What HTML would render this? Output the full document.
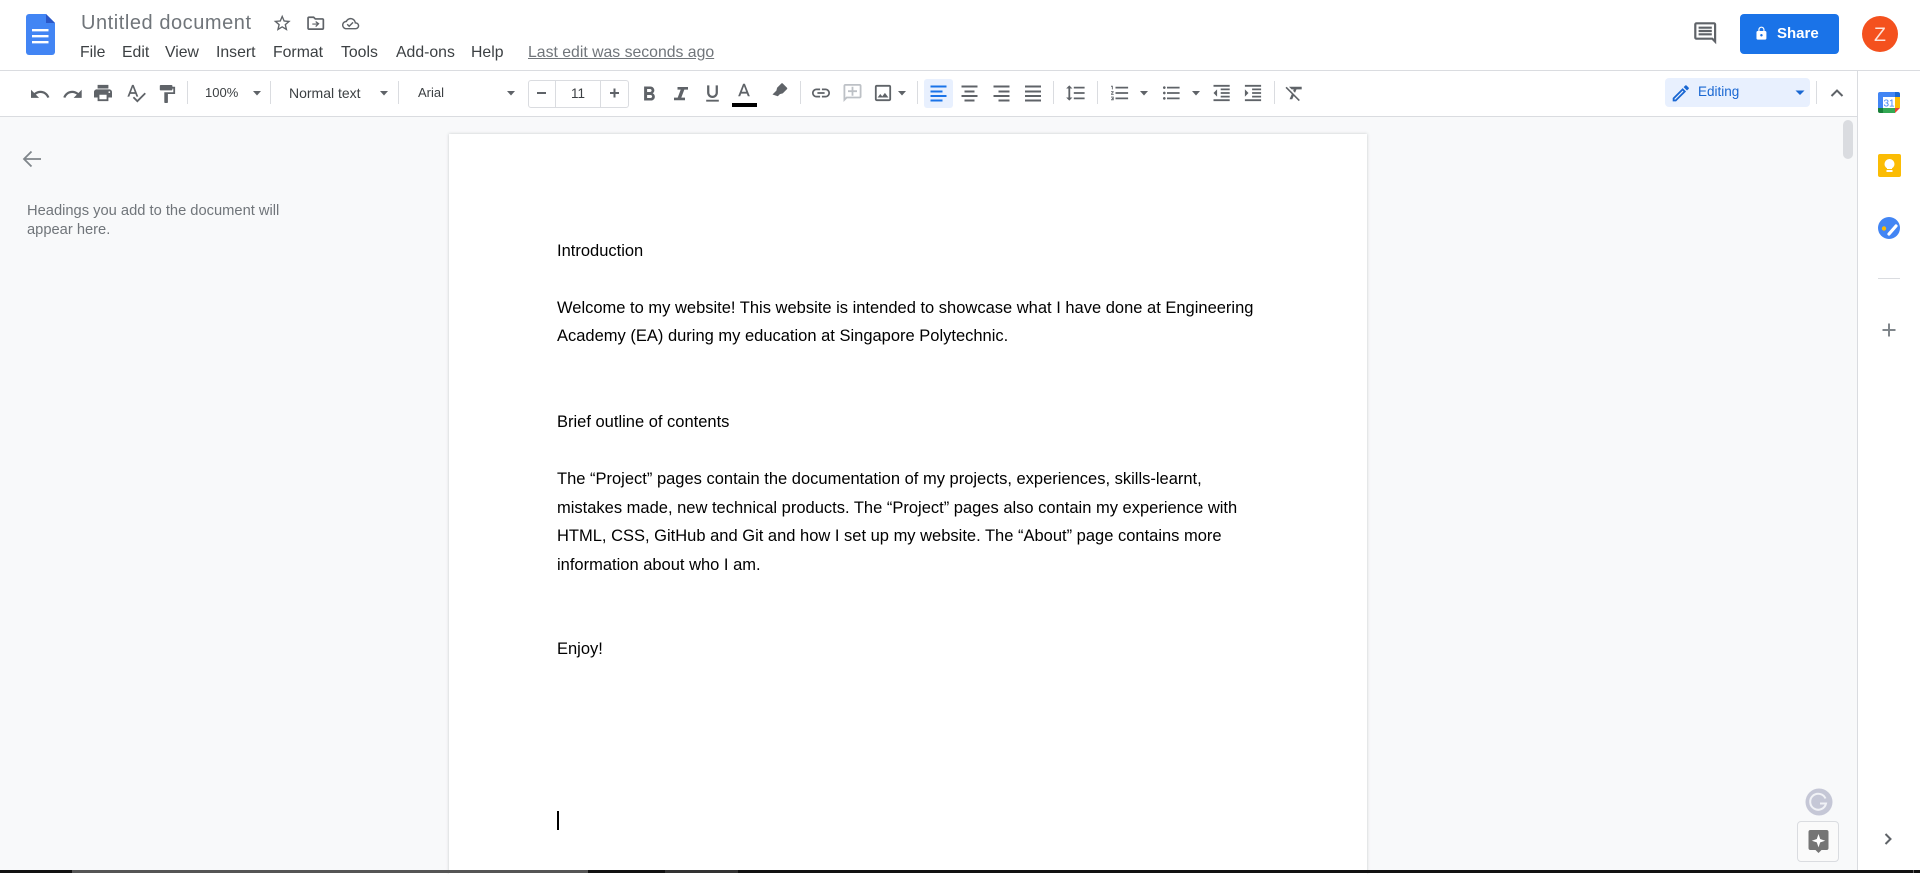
<!DOCTYPE html>
<html lang="en"><head><meta charset="utf-8"><title>Untitled document</title>
<style>
html,body{margin:0;padding:0;width:1920px;height:873px;overflow:hidden;background:#fff;font-family:"Liberation Sans",Arial,sans-serif}
.t{position:absolute;white-space:nowrap;line-height:20px}
.m{top:43px;font-size:15.8px;color:#3c4043}
.tb{top:83px;font-size:13px;color:#3c4043}
.d{position:absolute;left:557px;font-size:16.5px;line-height:28px;color:#000;white-space:nowrap}
.b{position:absolute}
svg.o{position:absolute;left:0;top:0}
</style></head><body>
<!-- backgrounds -->
<div class="b" style="left:0;top:116px;width:1857px;height:754px;background:#f8f9fa"></div>
<div class="b" style="left:0;top:70px;width:1920px;height:1px;background:#dadce0"></div>
<div class="b" style="left:0;top:116px;width:1857px;height:1px;background:#dadce0"></div>
<div class="b" style="left:1857px;top:70px;width:1px;height:800px;background:#dadce0"></div>
<div class="b" style="left:449px;top:134px;width:918px;height:740px;background:#fff;box-shadow:0 0 3px rgba(60,64,67,.25)"></div>
<!-- bottom bar -->
<div class="b" style="left:0;top:870px;width:1920px;height:3px;background:#111"></div>
<div class="b" style="left:72px;top:870px;width:516px;height:3px;background:#555"></div>
<div class="b" style="left:665px;top:870px;width:73px;height:3px;background:#333"></div>
<div class="b" style="left:1913px;top:870px;width:1px;height:3px;background:#666"></div>
<!-- controls boxes -->
<div class="b" style="left:528px;top:80px;width:99px;height:26px;border:1px solid #dadce0;border-radius:3px"></div>
<div class="b" style="left:555px;top:81px;width:1px;height:26px;background:#dadce0"></div>
<div class="b" style="left:600px;top:81px;width:1px;height:26px;background:#dadce0"></div>
<div class="b" style="left:732px;top:103px;width:25px;height:4px;background:#000"></div>
<div class="b" style="left:924px;top:79px;width:29px;height:29px;background:#e8f0fe;border-radius:3px"></div>
<div class="b" style="left:1665px;top:78px;width:145px;height:29px;background:#e8f0fe;border-radius:4px"></div>
<div class="b" style="left:1740px;top:14px;width:99px;height:40px;background:#1a73e8;border-radius:4px"></div>
<div class="b" style="left:1862px;top:16px;width:36px;height:36px;background:#f4511e;border-radius:50%"></div>
<div class="b" style="left:1843px;top:120px;width:10px;height:39px;background:#dadce0;border-radius:5px"></div>
<div class="b" style="left:1797px;top:821px;width:40px;height:39px;border:1px solid #dadce0;border-radius:4px;background:#fafafa"></div>
<div class="b" style="left:557px;top:811px;width:2px;height:19px;background:#000"></div>
<!-- separators -->
<div class="b" style="left:187px;top:81px;width:1px;height:23px;background:#dadce0"></div>
<div class="b" style="left:270px;top:81px;width:1px;height:23px;background:#dadce0"></div>
<div class="b" style="left:398px;top:81px;width:1px;height:23px;background:#dadce0"></div>
<div class="b" style="left:800px;top:81px;width:1px;height:23px;background:#dadce0"></div>
<div class="b" style="left:917px;top:81px;width:1px;height:23px;background:#dadce0"></div>
<div class="b" style="left:1053px;top:81px;width:1px;height:23px;background:#dadce0"></div>
<div class="b" style="left:1097px;top:81px;width:1px;height:23px;background:#dadce0"></div>
<div class="b" style="left:1274px;top:81px;width:1px;height:23px;background:#dadce0"></div>
<div class="b" style="left:1816px;top:81px;width:1px;height:23px;background:#dadce0"></div>
<div class="b" style="left:1878px;top:278px;width:22px;height:1px;background:#dadce0"></div>
<!-- text -->
<div class="t" style="left:81px;top:13px;font-size:20px;letter-spacing:.55px;color:#70757a">Untitled document</div>
<div class="t m" style="left:80px">File</div>
<div class="t m" style="left:122px">Edit</div>
<div class="t m" style="left:165px">View</div>
<div class="t m" style="left:216px">Insert</div>
<div class="t m" style="left:273px">Format</div>
<div class="t m" style="left:341px">Tools</div>
<div class="t m" style="left:396px">Add-ons</div>
<div class="t m" style="left:471px">Help</div>
<div class="t m" style="left:528px;color:#70757a;text-decoration:underline">Last edit was seconds ago</div>
<div class="t tb" style="left:205px">100%</div>
<div class="t tb" style="left:289px;font-size:14px">Normal text</div>
<div class="t tb" style="left:418px">Arial</div>
<div class="t tb" style="left:571px;top:84px;font-size:13.5px">11</div>
<div class="t" style="left:1777px;top:24px;font-size:15px;font-weight:700;color:#fff">Share</div>
<div class="t" style="left:1874px;top:25px;font-size:19.5px;color:#fde3da">Z</div>
<div class="t tb" style="left:1698px;top:82px;color:#1967d2;font-size:13.5px">Editing</div>
<div class="t" style="left:27px;top:201px;font-size:14.7px;color:#70757a">Headings you add to the document will</div>
<div class="t" style="left:27px;top:220px;font-size:14.7px;color:#70757a">appear here.</div>
<div class="d" style="top:237px">Introduction</div>
<div class="d" style="top:294px">Welcome to my website! This website is intended to showcase what I have done at Engineering</div>
<div class="d" style="top:322px">Academy (EA) during my education at Singapore Polytechnic.</div>
<div class="d" style="top:408px">Brief outline of contents</div>
<div class="d" style="top:465px">The “Project” pages contain the documentation of my projects, experiences, skills-learnt,</div>
<div class="d" style="top:494px">mistakes made, new technical products. The “Project” pages also contain my experience with</div>
<div class="d" style="top:522px">HTML, CSS, GitHub and Git and how I set up my website. The “About” page contains more</div>
<div class="d" style="top:551px">information about who I am.</div>
<div class="d" style="top:635px">Enjoy!</div>
<!-- icons -->
<svg class="o" width="1920" height="873" viewBox="0 0 1920 873">
<!-- docs logo -->
<path d="M29 14h17l9 9v29a3 3 0 0 1-3 3H29a3 3 0 0 1-3-3V17a3 3 0 0 1 3-3z" fill="#4285f4"/>
<path d="M46 14l9 9h-9z" fill="#2a56c6"/>
<path d="M32 29h16.5v2.4H32zM32 35h16.5v2.4H32zM32 41h16.5v2.4H32z" fill="#fff"/>
<g fill="#5f6368">
<g transform="translate(272,13) scale(.85)"><path d="M22 9.24l-7.19-.62L12 2 9.19 8.63 2 9.24l5.46 4.73L5.82 21 12 17.27 18.18 21l-1.63-7.03L22 9.24zM12 15.4l-3.76 2.27 1-4.28-3.32-2.88 4.38-.38L12 6.1l1.71 4.04 4.38.38-3.32 2.88 1 4.28L12 15.4z"/></g>
<g transform="translate(305.5,13) scale(.85)"><path d="M20 6h-8l-2-2H4c-1.1 0-2 .9-2 2v12c0 1.1.9 2 2 2h16c1.1 0 2-.9 2-2V8c0-1.1-.9-2-2-2zm0 12H4V6h5.170l2 2H20v10zM12.500 9.500l-1 1 1.800 1.800H8v1.400h5.300l-1.800 1.800 1 1 4-4z"/></g>
<g transform="translate(342,15) scale(.72)"><path d="M19.350 10.040C18.670 6.590 15.640 4 12 4 9.110 4 6.600 5.640 5.350 8.040 2.340 8.360 0 10.910 0 14c0 3.310 2.690 6 6 6h13c2.760 0 5-2.240 5-5 0-2.640-2.050-4.780-4.650-4.960zM19 18H6c-2.210 0-4-1.790-4-4 0-2.050 1.530-3.760 3.560-3.970l1.070-.11.500-.95C8.080 7.140 9.940 6 12 6c2.620 0 4.880 1.860 5.390 4.430l.3 1.500 1.530.11c1.560.1 2.780 1.410 2.780 2.960 0 1.650-1.350 3-3 3zm-9-3.820l-2.090-2.090L6.500 13.500 10 17l6.010-6.010-1.410-1.410z"/></g>
<g transform="translate(29.200,83.500) scale(.9)"><path d="M12.500 8c-2.650 0-5.050.99-6.900 2.600L2 7v9h9l-3.620-3.620c1.390-1.160 3.160-1.880 5.120-1.880 3.540 0 6.550 2.310 7.600 5.500l2.370-.78C21.080 11.030 17.150 8 12.500 8z"/></g>
<g transform="translate(61.900,83.500) scale(.9)"><path d="M18.400 10.600C16.550 8.990 14.150 8 11.500 8c-4.650 0-8.580 3.030-9.960 7.220L3.900 16c1.050-3.190 4.050-5.500 7.600-5.500 1.950 0 3.730.72 5.120 1.880L13 16h9V7l-3.600 3.600z"/></g>
<g transform="translate(92.200,82.200) scale(.9)"><path d="M19 8H5c-1.660 0-3 1.340-3 3v6h4v4h12v-4h4v-6c0-1.660-1.340-3-3-3zm-3 11H8v-5h8v5zm3-7c-.55 0-1-.45-1-1s.45-1 1-1 1 .45 1 1-.45 1-1 1zm-1-9H6v4h12V3z"/></g>
<g transform="translate(125.200,82.200) scale(.9)"><path d="M12.450 16h2.090L9.430 3H7.570L2.460 16h2.090l1.120-3h5.640l1.140 3zm-6.020-5L8.500 5.480 10.570 11H6.430zm15.160.59l-8.090 8.090L9.830 16l-1.410 1.410 5.090 5.090L23 13l-1.410-1.410z"/></g>
<g transform="translate(156.200,83.200) scale(.9)"><path d="M18 4V3c0-.55-.45-1-1-1H5c-.55 0-1 .45-1 1v4c0 .55.45 1 1 1h12c.55 0 1-.45 1-1V6h1v4H9v11c0 .55.45 1 1 1h2c.55 0 1-.45 1-1v-9h8V4h-3z"/></g>
<path d="M537 92h9v2h-9zM610 92h9v2h-9zM613.500 88.500h2v9h-2z"/>
<g transform="translate(637.100,82.500)"><path d="M15.600 10.790c.97-.67 1.650-1.770 1.650-2.790 0-2.260-1.750-4-4-4H7v14h7.040c2.090 0 3.710-1.700 3.710-3.790 0-1.520-.86-2.820-2.150-3.420zM10 6.500h3c.83 0 1.500.67 1.500 1.500s-.67 1.500-1.500 1.500h-3v-3zm3.500 9H10v-3h3.500c.83 0 1.500.67 1.500 1.500s-.67 1.500-1.500 1.500z"/></g>
<path d="M677.500 87h10.500v2.600h-3.700l-3 8h3.700v2.600H674v-2.600h3.700l3-8h-3.200z"/>
<g transform="translate(701.700,82.700) scale(.9)"><path d="M12 17c3.310 0 6-2.690 6-6V3h-2.500v8c0 1.930-1.570 3.500-3.500 3.500S8.500 12.930 8.500 11V3H6v8c0 3.310 2.690 6 6 6zm-7 2v2h14v-2H5z"/></g>
<g transform="translate(733.200,81) scale(.9)"><path d="M11 3L5.500 17h2.250l1.120-3h6.250l1.120 3h2.250L13 3h-2zm-1.380 9L12 5.670 14.380 12H9.620z"/></g>
<g transform="translate(778.500,92) rotate(45)"><path d="M-4 -8a1 1 0 0 1 1-1h6a1 1 0 0 1 1 1v6l-1.500 2.500v3l-5 2.500v-5.500L-4 -2z"/></g>
<g transform="translate(810.200,82.200) scale(.9)"><path d="M3.900 12c0-1.710 1.390-3.100 3.100-3.100h4V7H7c-2.760 0-5 2.240-5 5s2.240 5 5 5h4v-1.900H7c-1.710 0-3.100-1.390-3.100-3.100zM8 13h8v-2H8v2zm9-6h-4v1.900h4c1.710 0 3.100 1.390 3.100 3.100s-1.390 3.100-3.100 3.100h-4V17h4c2.760 0 5-2.240 5-5s-2.240-5-5-5z"/></g>
<g transform="translate(841.700,82.200) scale(.9)" fill="#bdc1c6"><path d="M22 4c0-1.100-.9-2-2-2H4c-1.100 0-2 .9-2 2v12c0 1.100.9 2 2 2h14l4 4V4zm-2 13.170L18.830 16H4V4h16v13.170zM13 5h-2v4H7v2h4v4h2v-4h4V9h-4z" transform="matrix(-1 0 0 1 24 0)"/></g>
<g transform="translate(872.200,82.200) scale(.9)"><path d="M19 5v14H5V5h14m0-2H5c-1.100 0-2 .9-2 2v14c0 1.100.9 2 2 2h14c1.100 0 2-.9 2-2V5c0-1.100-.9-2-2-2zm-4.860 8.860l-3 3.870L9 13.140 6 17h12l-3.860-5.140z"/></g>
<path d="M961.500 85.500h16v2h-16zM964.500 90.500h10v2h-10zM961.500 95h16v2h-16zM964.500 99.500h10v2h-10z"/>
<path d="M993.500 85.500h16v2h-16zM998.500 90.500h11v2h-11zM993.500 95h16v2h-16zM998.500 99.500h11v2h-11z"/>
<path d="M1025 85.500h16v2h-16zM1025 90.500h16v2h-16zM1025 95h16v2h-16zM1025 99.500h16v2h-16z"/>
<g transform="translate(1064.800,82.200) scale(.9)"><path d="M6 7h2.500L5 3.500 1.500 7H4v10H1.500L5 20.500 8.500 17H6V7zm4-2v2h12V5H10zm0 14h12v-2H10v2zm0-6h12v-2H10v2z"/></g>
<g transform="translate(1109.200,82.200) scale(.9)"><path d="M2 17h2v.5H3v1h1v.5H2v1h3v-4H2v1zm1-9h1V4H2v1h1v3zm-1 3h1.800L2 13.100v.9h3v-1H3.200L5 10.900V10H2v1zm5-6v2h14V5H7zm0 14h14v-2H7v2zm0-6h14v-2H7v2z"/></g>
<g transform="translate(1160.700,82.200) scale(.9)"><path d="M4 10.500c-.83 0-1.500.67-1.500 1.500s.67 1.500 1.500 1.500 1.500-.67 1.500-1.500-.67-1.500-1.500-1.500zm0-6c-.83 0-1.500.67-1.500 1.500S3.170 7.500 4 7.500 5.500 6.830 5.500 6 4.830 4.500 4 4.500zm0 12c-.83 0-1.500.68-1.500 1.500s.68 1.500 1.500 1.500 1.500-.68 1.500-1.500-.67-1.500-1.500-1.500zM7 19h14v-2H7v2zm0-6h14v-2H7v2zm0-8v2h14V5H7z"/></g>
<g transform="translate(1210.800,82.200) scale(.9)"><path d="M11 17h10v-2H11v2zm-8-5l4 4V8l-4 4zm0 9h18v-2H3v2zM3 3v2h18V3H3zm8 6h10V7H11v2zm0 4h10v-2H11v2z"/></g>
<g transform="translate(1242.200,82.200) scale(.9)"><path d="M3 21h18v-2H3v2zM3 8v8l4-4-4-4zm8 9h10v-2H11v2zM3 3v2h18V3H3zm8 6h10V7H11v2zm0 4h10v-2H11v2z"/></g>
<g transform="translate(1283.700,82.200) scale(.9)"><path d="M3.270 5L2 6.270l6.970 6.970L6.500 19h3l1.570-3.660L16.730 21 18 19.730 3.550 5.270 3.270 5zM6 5v.18L8.820 8h2.400l-.72 1.680 2.100 2.100L14.210 8H20V5H6z"/></g>
<!-- carets -->
<path d="M253 91l4 4.500 4-4.500zM380 91l4 4.500 4-4.500zM507 91l4 4.500 4-4.500zM898 91l4 4.500 4-4.500zM1140 91l4 4.500 4-4.500zM1192 91l4 4.500 4-4.500z"/>
<g transform="translate(1692,20) scale(1.100)"><path d="M21.990 4c0-1.100-.89-2-1.990-2H4c-1.100 0-2 .9-2 2v12c0 1.100.9 2 2 2h14l4 4-.01-18zM20 4v13.170L18.830 16H4V4h16zM6 12h12v2H6zm0-3h12v2H6zm0-3h12v2H6z"/></g>
<path d="M1831.500 96l5.500-5.500 5.500 5.500" fill="none" stroke="#5f6368" stroke-width="2"/>
<path d="M1888 323.500h2v5.500h5.500v2H1890v5.500h-2V331h-5.500v-2h5.500z" fill="#80868b"/>
<path d="M1885.500 834l5 5-5 5" fill="none" stroke="#5f6368" stroke-width="2"/>
<path d="M41 159H24M31.500 151.500L24 159l7.500 7.500" fill="none" stroke="#80868b" stroke-width="1.800"/>
</g>
<!-- share lock -->
<g transform="translate(1754,26) scale(.62)" fill="#fff"><path d="M18 8h-1V6c0-2.760-2.240-5-5-5S7 3.240 7 6v2H6c-1.100 0-2 .9-2 2v10c0 1.100.9 2 2 2h12c1.100 0 2-.9 2-2V10c0-1.100-.9-2-2-2zm-6 9c-1.100 0-2-.9-2-2s.9-2 2-2 2 .9 2 2-.9 2-2 2zM15.100 8H8.900V6c0-1.710 1.390-3.100 3.100-3.100s3.100 1.390 3.100 3.100v2z"/></g>
<!-- editing -->
<g transform="translate(1670,82.500) scale(.9)" fill="#1967d2"><path d="M14.060 9.020l.92.92L5.920 19H5v-.92l9.060-9.060M17.660 3c-.25 0-.51.1-.7.290l-1.830 1.830 3.750 3.750 1.830-1.830c.39-.39.39-1.020 0-1.410l-2.340-2.340c-.2-.2-.45-.29-.71-.29zm-3.600 3.190L3 17.250V21h3.750L17.810 9.940l-3.750-3.750z"/></g>
<path d="M1795.500 90.500l4.500 4.500 4.500-4.500z" fill="#1967d2"/>
<!-- highlighted align left -->
<path d="M930.500 85.500h16v2h-16zM930.500 90.500h12v2h-12zM930.500 95h16v2h-16zM930.500 99.500h12v2h-12z" fill="#1a73e8"/>
<!-- calendar -->
<rect x="1878" y="92" width="22" height="21" rx="2" fill="#fff"/>
<path d="M1878 94a2 2 0 0 1 2-2h15v5h-12v11h-5z" fill="#4285f4"/>
<path d="M1895 92h3a2 2 0 0 1 2 2v3h-5z" fill="#1967d2"/>
<path d="M1895 97h5v11h-5z" fill="#fbbc04"/>
<path d="M1883 108h12v5h-12z" fill="#34a853"/>
<path d="M1878 108h5v5h-3a2 2 0 0 1-2-2z" fill="#188038"/>
<path d="M1895 108h5l-5 5z" fill="#ea4335"/>
<text x="1889" y="106.500" font-size="10" fill="#4285f4" text-anchor="middle" font-family="Liberation Sans">31</text>
<!-- keep -->
<rect x="1878" y="154" width="23" height="23" rx="2" fill="#fbbc04"/>
<circle cx="1889.500" cy="164" r="5" fill="#fff"/>
<path d="M1887 167.500h5v1.500h-5zM1886.500 170h6v2h-6z" fill="#fff"/>
<!-- tasks -->
<circle cx="1889" cy="228" r="11" fill="#4285f4"/>
<path d="M1889 234l7-8" stroke="#fff" stroke-width="3.200" stroke-linecap="round"/>
<circle cx="1884" cy="228.500" r="2.200" fill="#fbbc04"/>
<!-- grammarly -->
<circle cx="1819" cy="802" r="13.500" fill="#c5c7d6"/>
<path d="M1825.500 798.500a8 8 0 1 0 .5 5h-6" fill="none" stroke="#f1f2f6" stroke-width="2"/>
<!-- explore -->
<path d="M1810.500 830h16a2 2 0 0 1 2 2v16a2 2 0 0 1-2 2h-5l-3 3-3-3h-5a2 2 0 0 1-2-2v-16a2 2 0 0 1 2-2z" fill="#757575"/>
<path d="M1818.500 834l1.700 5 5 1.700-5 1.700-1.700 5-1.700-5-5-1.700 5-1.700z" fill="#fff"/>
</svg>
</body></html>
